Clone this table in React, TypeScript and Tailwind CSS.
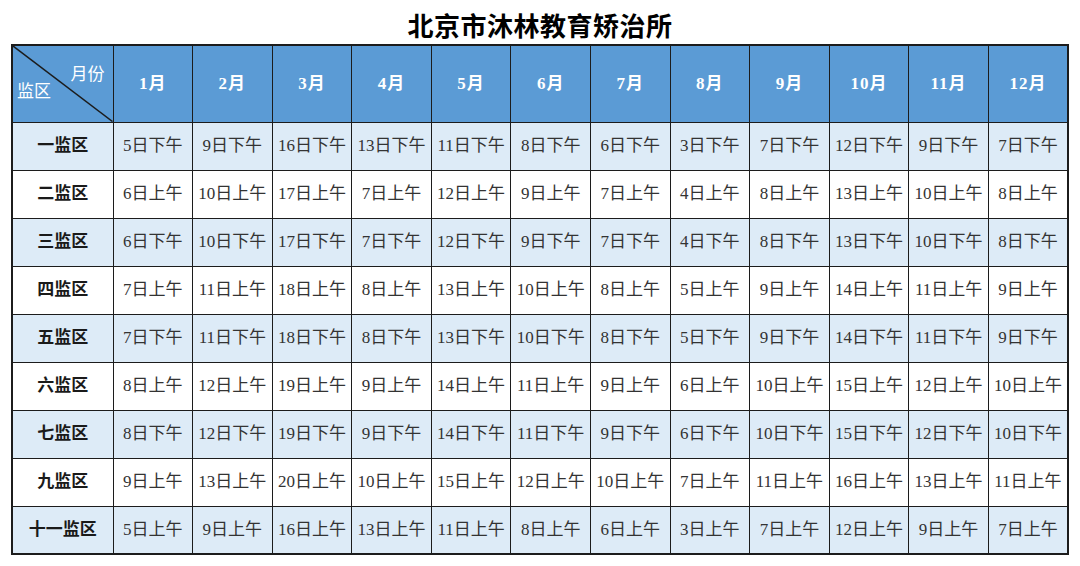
const MONTHS = ["1月", "2月", "3月", "4月", "5月", "6月", "7月", "8月", "9月", "10月", "11月", "12月"];

const rows: { name: string; days: number[]; half: string }[] = [
  { name: "一监区", days: [5, 9, 16, 13, 11, 8, 6, 3, 7, 12, 9, 7], half: "下午" },
  { name: "二监区", days: [6, 10, 17, 7, 12, 9, 7, 4, 8, 13, 10, 8], half: "上午" },
  { name: "三监区", days: [6, 10, 17, 7, 12, 9, 7, 4, 8, 13, 10, 8], half: "下午" },
  { name: "四监区", days: [7, 11, 18, 8, 13, 10, 8, 5, 9, 14, 11, 9], half: "上午" },
  { name: "五监区", days: [7, 11, 18, 8, 13, 10, 8, 5, 9, 14, 11, 9], half: "下午" },
  { name: "六监区", days: [8, 12, 19, 9, 14, 11, 9, 6, 10, 15, 12, 10], half: "上午" },
  { name: "七监区", days: [8, 12, 19, 9, 14, 11, 9, 6, 10, 15, 12, 10], half: "下午" },
  { name: "九监区", days: [9, 13, 20, 10, 15, 12, 10, 7, 11, 16, 13, 11], half: "上午" },
  { name: "十一监区", days: [5, 9, 16, 13, 11, 8, 6, 3, 7, 12, 9, 7], half: "上午" },
];

const CELL = "border-[1.5px] border-[#1c1c1c] text-center p-0 whitespace-nowrap";

export default function App() {
  return (
    <div className="w-[1080px] h-[566px] bg-white font-['Liberation_Serif','Noto_Sans_CJK_SC',serif]">
      <h1 className="h-[44px] pt-[8px] text-center text-[26px] leading-[34px] font-bold text-black font-['Noto_Sans_CJK_SC',sans-serif] tracking-[0.5px]">
        北京市沐林教育矫治所
      </h1>
      <table className="ml-[11px] w-[1058px] table-fixed border-collapse border-2 border-[#1c1c1c]">
        <colgroup>
          <col className="w-[101px]" />
          {MONTHS.map((m) => (
            <col key={m} />
          ))}
        </colgroup>
        <thead>
          <tr className="h-[77px] bg-[#5b9bd5] text-white">
            <th className={`${CELL} relative`}>
              <svg className="absolute inset-0 w-full h-full" viewBox="0 0 100 100" preserveAspectRatio="none">
                <line x1="0" y1="0" x2="100" y2="100" stroke="#1c1c1c" strokeWidth="1.5" vectorEffect="non-scaling-stroke" />
              </svg>
              <span className="absolute right-[8px] top-[16px] text-[17px] font-normal">月份</span>
              <span className="absolute left-[4px] bottom-[17px] text-[17px] font-normal">监区</span>
            </th>
            {MONTHS.map((m) => (
              <th key={m} className={`${CELL} text-[17px] font-bold tracking-[1px]`}>
                {m}
              </th>
            ))}
          </tr>
        </thead>
        <tbody>
          {rows.map((r, i) => (
            <tr key={r.name} className={`h-[48px] ${i % 2 === 0 ? "bg-[#ddebf7]" : "bg-white"}`}>
              <td className={`${CELL} text-[17px] font-bold text-[#1a1a1a]`}>{r.name}</td>
              {r.days.map((d, j) => (
                <td key={j} className={`${CELL} text-[17px] text-[#333]`}>
                  {d}日{r.half}
                </td>
              ))}
            </tr>
          ))}
        </tbody>
      </table>
    </div>
  );
}
